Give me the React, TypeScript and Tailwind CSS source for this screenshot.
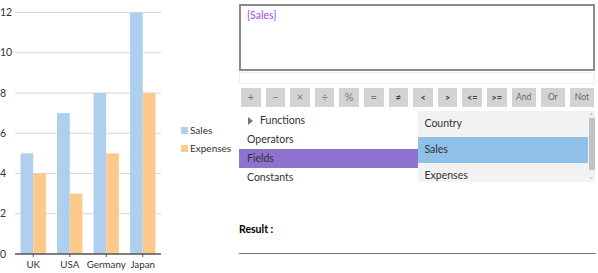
import React from "react";

const font = { fontFamily: "Lato, 'Open Sans', sans-serif" };

const chartData = [
  { country: "UK", sales: 5, expenses: 4 },
  { country: "USA", sales: 7, expenses: 3 },
  { country: "Germany", sales: 8, expenses: 5 },
  { country: "Japan", sales: 12, expenses: 8 }
];

const operators = ["+", "−", "×", "÷", "%", "=", "≠", "<", ">", "<=", ">=", "And", "Or", "Not"];

function Chart() {
  const top = 12.5;
  const bottom = 254;
  const left = 15;
  const right = 161;
  const step = (bottom - top) / 12;
  const band = (right - left) / chartData.length;
  const barW = 12.7;

  return (
    <svg width="172" height="273" className="block shrink-0">
      {[0, 2, 4, 6, 8, 10, 12].map((v) => {
        const y = bottom - v * step;
        return (
          <g key={v}>
            {v > 0 && <line x1={left} x2={right} y1={y} y2={y} stroke="#d6d6d6" strokeWidth="1" />}
            <text x="0" y={y + 3.5} fontSize="10.5" fill="#333" style={font}>
              {v}
            </text>
          </g>
        );
      })}
      {chartData.map((d, i) => {
        const cx = left + band * i + band / 2;
        return (
          <g key={d.country}>
            <rect x={cx - barW} y={bottom - d.sales * step} width={barW} height={d.sales * step} fill="#aed0ee" />
            <rect x={cx} y={bottom - d.expenses * step} width={barW} height={d.expenses * step} fill="#fec98b" />
            <line x1={cx} x2={cx} y1={bottom} y2={bottom + 3} stroke="#555" />
            <text x={cx} y="268" fontSize="9.8" fill="#333" textAnchor="middle" style={font}>
              {d.country}
            </text>
          </g>
        );
      })}
      <line x1={left} x2={right} y1={bottom} y2={bottom} stroke="#555" strokeWidth="1.5" />
    </svg>
  );
}

function Legend() {
  return (
    <div className="flex flex-col gap-[3px] pt-[123px] pl-[9px] text-[10px] text-[#333]" style={font}>
      <div className="flex items-center gap-[2px]">
        <span className="h-[7px] w-[7px] bg-[#aed0ee]" />
        Sales
      </div>
      <div className="flex items-center gap-[2px]">
        <span className="h-[7px] w-[7px] bg-[#fec98b]" />
        Expenses
      </div>
    </div>
  );
}

export default function App() {
  return (
    <div className="flex h-[273px] w-[598px] overflow-hidden bg-white text-[#333]" style={font}>
      <div className="flex w-[238px] shrink-0">
        <Chart />
        <Legend />
      </div>

      <div className="flex w-[357px] flex-col pl-[1px] pt-[4px]">
        <div className="h-[67px] border-2 border-[#8a8a8a] px-[6px] pt-[2px] text-[10.5px] text-[#a14ee6]">
          [Sales]
        </div>
        <div className="mt-[1px] h-[12px] border border-[#eeeeee]" />

        <div className="mt-[4px] flex h-[19px] justify-between pl-[2px] pr-[1px]">
          {operators.map((op, i) => (
            <button
              key={op}
              type="button"
              className={`flex h-full items-center justify-center bg-[#d3d3d3] ${
                i < 11 ? "w-[19.5px]" : "w-[24px]"
              } ${
                i < 6
                  ? "text-[11px] text-[#7a7a7a]"
                  : i < 11
                    ? "text-[9px] font-black text-[#444]"
                    : "text-[8.5px] text-[#666]"
              }`}
            >
              {op}
            </button>
          ))}
        </div>

        <div className="mt-[4px] flex">
          <div className="flex w-[179px] flex-col text-[10.5px] text-[#333]">
            <div className="flex h-[19px] items-center pl-[9px]">
              <svg width="5" height="8" viewBox="0 0 5 8" className="mr-[7px]">
                <path d="M0 0 L5 4 L0 8 Z" fill="#777" />
              </svg>
              Functions
            </div>
            <div className="flex h-[19px] items-center pl-[8px]">Operators</div>
            <div className="flex h-[19px] items-center bg-[#8e72d0] pl-[8px]">Fields</div>
            <div className="flex h-[19px] items-center pl-[8px]">Constants</div>
          </div>

          <div className="relative flex h-[71px] w-[178px] overflow-hidden bg-[#f2f2f2] text-[10.5px] text-[#333]">
            <div className="flex flex-1 flex-col">
              <div className="flex h-[26px] shrink-0 items-center pl-[7px]">Country</div>
              <div className="flex h-[26px] shrink-0 items-center bg-[#8fc0e8] pl-[7px]">Sales</div>
              <div className="flex h-[26px] shrink-0 items-center pl-[7px]">Expenses</div>
            </div>
            <div className="flex w-[7px] flex-col items-center">
              <span className="h-[7px] text-[6px] leading-[7px] text-[#999]">˄</span>
              <div className="h-[52px] w-[6px] bg-[#c2c2c2]" />
              <span className="mt-auto h-[7px] text-[6px] leading-[7px] text-[#999]">˅</span>
            </div>
          </div>
        </div>

        <div className="mt-[35px] text-[10.5px] font-bold text-black">Result :</div>
        <div className="mt-[15px] h-[1.5px] w-[357px] bg-[#777]" />
      </div>
    </div>
  );
}
